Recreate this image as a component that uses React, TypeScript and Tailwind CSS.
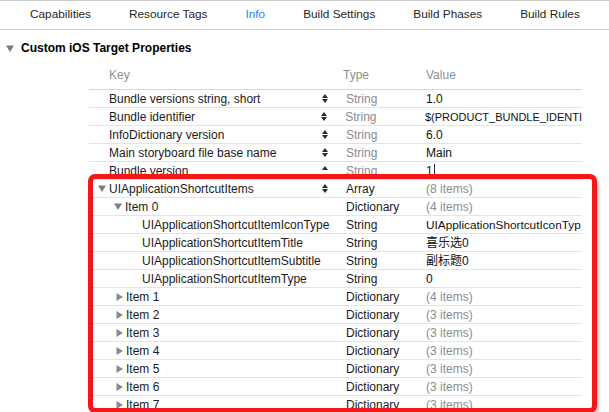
const tabs = ["Capabilities", "Resource Tags", "Info", "Build Settings", "Build Phases", "Build Rules"];

type Row = {
  key: string;
  pad: number;
  disclosure?: "open" | "closed";
  stepper?: "both" | "up";
  type: string;
  value: string;
  dim?: boolean;
  muted?: boolean;
  cursor?: boolean;
  size?: string;
};

const rows: Row[] = [
  { key: "Bundle versions string, short", pad: 20, stepper: "both", type: "String", value: "1.0", dim: true },
  { key: "Bundle identifier", pad: 20, stepper: "both", type: "String", value: "$(PRODUCT_BUNDLE_IDENTI", dim: true, size: "text-[11px]" },
  { key: "InfoDictionary version", pad: 20, stepper: "both", type: "String", value: "6.0", dim: true },
  { key: "Main storyboard file base name", pad: 20, stepper: "both", type: "String", value: "Main", dim: true },
  { key: "Bundle version", pad: 20, stepper: "up", type: "String", value: "1", dim: true, cursor: true },
  { key: "UIApplicationShortcutItems", pad: 9, disclosure: "open", stepper: "both", type: "Array", value: "(8 items)", muted: true },
  { key: "Item 0", pad: 25, disclosure: "open", type: "Dictionary", value: "(4 items)", muted: true },
  { key: "UIApplicationShortcutItemIconType", pad: 53, type: "String", value: "UIApplicationShortcutIconTyp", size: "text-[11.8px]" },
  { key: "UIApplicationShortcutItemTitle", pad: 53, type: "String", value: "喜乐选0" },
  { key: "UIApplicationShortcutItemSubtitle", pad: 53, type: "String", value: "副标题0" },
  { key: "UIApplicationShortcutItemType", pad: 53, type: "String", value: "0" },
  { key: "Item 1", pad: 27, disclosure: "closed", type: "Dictionary", value: "(4 items)", muted: true },
  { key: "Item 2", pad: 27, disclosure: "closed", type: "Dictionary", value: "(3 items)", muted: true },
  { key: "Item 3", pad: 27, disclosure: "closed", type: "Dictionary", value: "(3 items)", muted: true },
  { key: "Item 4", pad: 27, disclosure: "closed", type: "Dictionary", value: "(3 items)", muted: true },
  { key: "Item 5", pad: 27, disclosure: "closed", type: "Dictionary", value: "(3 items)", muted: true },
  { key: "Item 6", pad: 27, disclosure: "closed", type: "Dictionary", value: "(3 items)", muted: true },
  { key: "Item 7", pad: 27, disclosure: "closed", type: "Dictionary", value: "(3 items)", muted: true },
];

function Disclosure({ open }: { open: boolean }) {
  return open ? (
    <svg width="8" height="7" viewBox="0 0 8 7" className="mr-[3px] shrink-0">
      <path d="M0 0.5 H8 L4 7 Z" fill="#7f7f7f" />
    </svg>
  ) : (
    <svg width="7" height="8" viewBox="0 0 7 8" className="mr-[3px] shrink-0">
      <path d="M0.5 0 L7 4 L0.5 8 Z" fill="#8a8a8a" />
    </svg>
  );
}

function Stepper({ kind }: { kind: "both" | "up" }) {
  return (
    <div className="flex flex-col items-center gap-[1px]">
      <svg width="6" height="4" viewBox="0 0 6 4">
        <path d="M3 0 L6 4 H0 Z" fill="#2b2b2b" />
      </svg>
      <svg width="6" height="4" viewBox="0 0 6 4" className={kind === "up" ? "invisible" : ""}>
        <path d="M0 0 H6 L3 4 Z" fill="#2b2b2b" />
      </svg>
    </div>
  );
}

export default function App() {
  return (
    <div
      className="relative h-[412px] w-[609px] overflow-hidden bg-white text-[12px] text-[#1b1b1b]"
      style={{ fontFamily: '"Liberation Sans", "Noto Sans CJK SC", sans-serif' }}
    >
      {/* Tab bar */}
      <div className="flex h-[30px] items-center gap-[38px] border-y border-[#cfcfcf] pl-[30px] text-[11.8px]">
        {tabs.map((t) => (
          <span key={t} className={t === "Info" ? "text-[#2f7fe6]" : "text-[#1f1f1f]"}>
            {t}
          </span>
        ))}
      </div>

      {/* Section title */}
      <div className="flex h-[36px] items-center pl-[6px]">
        <svg width="8" height="7" viewBox="0 0 8 7" className="mr-[7px]">
          <path d="M0 0.5 H8 L4 7 Z" fill="#7a7a7a" />
        </svg>
        <span className="font-bold text-black">Custom iOS Target Properties</span>
      </div>

      {/* Property table */}
      <div className="ml-[89px] w-[493px]">
        <div className="flex h-[24px] border-b border-[#d6d6d6] pt-[1px] leading-[16px] text-[#8f8f8f]">
          <div className="w-[253px] pl-[20px]">Key</div>
          <div className="w-[84px] pl-[1px]">Type</div>
          <div className="flex-1">Value</div>
        </div>
        {rows.map((r) => (
          <div key={r.key} className="flex h-[18px] items-center border-b border-[#e4e4e4] leading-[16px]">
            <div className="flex w-[229px] items-center whitespace-nowrap" style={{ paddingLeft: r.pad }}>
              {r.disclosure && <Disclosure open={r.disclosure === "open"} />}
              <span>{r.key}</span>
            </div>
            <div className="flex w-[24px] pl-[4px]">{r.stepper && <Stepper kind={r.stepper} />}</div>
            <div className={`w-[84px] pl-[4px] ${r.dim ? "text-[#8c8c8c]" : "text-[#1b1b1b]"}`}>{r.type}</div>
            <div
              className={`flex flex-1 items-center whitespace-nowrap ${r.size ?? ""} ${
                r.muted ? "text-[#8c8c8c]" : "text-[#111]"
              }`}
            >
              {r.value}
              {r.cursor && <span className="ml-[1px] h-[14px] w-px bg-[#1f2a5a]" />}
            </div>
          </div>
        ))}
      </div>

      {/* Red highlight annotation */}
      <div className="absolute left-[88px] top-[174px] h-[239px] w-[509px] rounded-[7px] border-[5px] border-[#f21818] shadow-[2px_2px_3px_rgba(0,0,0,0.25)]" />
    </div>
  );
}
